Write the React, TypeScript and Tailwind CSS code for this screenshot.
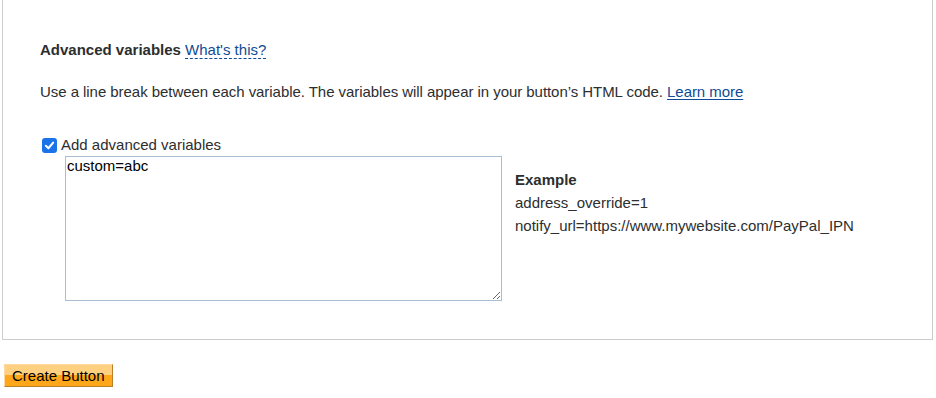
import React from "react";

export default function App() {
  return (
    <div className="font-['Liberation_Sans',Arial,sans-serif] text-[15px] text-[#2c2e2f] bg-white min-h-[398px]">
      <div className="ml-[2px] w-[931px] border border-t-0 border-[#cccccc] pl-[37px] pt-[41px] pb-[38px]">
        <div className="leading-[17px]">
          <span className="font-bold">Advanced variables</span>{" "}
          <a className="text-[#0f4c95] border-b border-dashed border-[#0f4c95] cursor-help">What's this?</a>
        </div>
        <p className="mt-[25px] leading-[17px] tracking-[-0.05px]">
          Use a line break between each variable. The variables will appear in your button’s HTML code.{" "}
          <a className="text-[#0f4c95] underline underline-offset-2">Learn more</a>
        </p>
        <label className="mt-[37px] flex items-center h-[17px]">
          <span className="ml-[2px] w-[15px] h-[15px] rounded-[3px] bg-[#1a73e8] flex items-center justify-center">
            <svg width="11" height="11" viewBox="0 0 12 12">
              <path d="M2 6.3 L4.8 9 L10 2.8" fill="none" stroke="white" strokeWidth="2.2" strokeLinecap="round" strokeLinejoin="round" />
            </svg>
          </span>
          <span className="ml-[4px]">Add advanced variables</span>
        </label>
        <div className="mt-[2px] flex">
          <textarea
            defaultValue="custom=abc"
            className="ml-[25px] w-[437px] h-[145px] border border-[#a9bed3] px-[1px] py-0 text-[15px] leading-[17px] text-black font-['Liberation_Sans',Arial,sans-serif] outline-none"
          />
          <div className="ml-[13px] pt-[12px] leading-[23px]">
            <div className="font-bold">Example</div>
            <div>address_override=1</div>
            <div>notify_url=https://www.mywebsite.com/PayPal_IPN</div>
          </div>
        </div>
      </div>
      <button className="mt-[24px] ml-[4px] h-[23px] px-[7px] text-[15px] text-black leading-[21px] border border-t-[#ffd9a0] border-l-[#ffd9a0] border-r-[#b8802a] border-b-[#b8802a] bg-[linear-gradient(#ffd080_0%,#ffd080_50%,#ffa71a_50%,#ffa71a_100%)]">
        Create Button
      </button>
    </div>
  );
}
